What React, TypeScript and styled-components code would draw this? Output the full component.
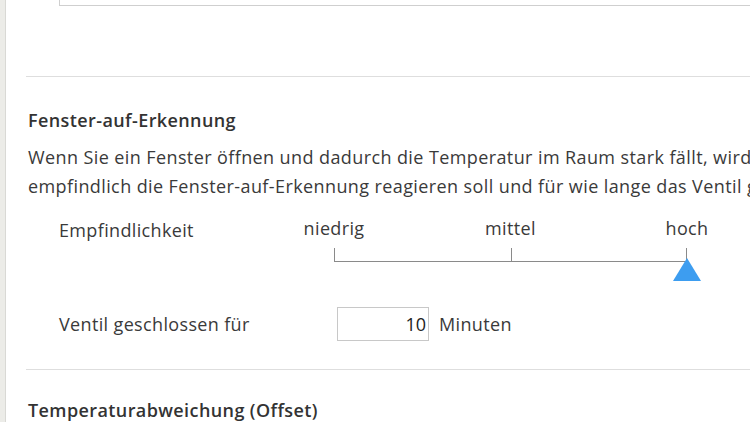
import React from "react";
import styled, { createGlobalStyle } from "styled-components";

const GlobalStyle = createGlobalStyle`
  html, body {
    margin: 0;
    padding: 0;
    background: #ffffff;
    overflow: hidden;
  }
  body {
    font-family: "Open Sans", "Noto Sans", sans-serif;
    color: #333333;
  }
`;

const Page = styled.div`
  display: flex;
  width: 750px;
  height: 422px;
  overflow: hidden;
`;

const Rail = styled.div`
  flex: 0 0 5px;
  background: #ecece8;
  border-right: 1px solid #d9d9d5;
`;

const Content = styled.div`
  flex: 1;
  min-width: 0;
  padding-left: 20px;
`;

const TopField = styled.div`
  margin-left: 33px;
  height: 5px;
  border-left: 1px solid #cfcfcf;
  border-bottom: 1px solid #cfcfcf;
`;

const Section = styled.section`
  margin-top: 70px;
  border-top: 1px solid #dedede;
  padding-left: 2px;
`;

const Heading = styled.h3`
  margin: 0;
  padding-top: 32px;
  font-size: 18px;
  font-weight: 600;
  letter-spacing: 0.4px;
  line-height: 22px;
  color: #333333;
`;

const Text = styled.p`
  margin: 12px 0 0;
  font-size: 18px;
  letter-spacing: 0.4px;
  line-height: 29px;
  color: #3a3a3a;
  white-space: nowrap;
`;

const Row = styled.div<{ $top: number }>`
  display: grid;
  grid-template-columns: 275px auto;
  align-items: start;
  margin-top: ${(p) => p.$top}px;
  padding-left: 31px;
  font-size: 18px;
  letter-spacing: 0.35px;
  color: #3a3a3a;
`;

const Label = styled.div<{ $shift?: number }>`
  padding-top: ${(p) => p.$shift ?? 0}px;
  line-height: 22px;
  align-self: ${(p) => (p.$shift === undefined ? "center" : "start")};
`;

const Slider = styled.div`
  width: 353px;
`;

const Marks = styled.div`
  display: flex;
  justify-content: space-between;
  line-height: 22px;
`;

const Mark = styled.span`
  width: 0;
  display: flex;
  justify-content: center;
  white-space: nowrap;
`;

const Track = styled.div`
  position: relative;
  margin-top: 9px;
  height: 14px;
  border-left: 1.5px solid #8a8a8a;
  border-right: 1.5px solid #8a8a8a;
  border-bottom: 1.5px solid #8a8a8a;
  box-sizing: border-box;
`;

const MidTick = styled.span`
  position: absolute;
  left: 50%;
  top: 0;
  bottom: 0;
  border-left: 1.5px solid #8a8a8a;
`;

const Thumb = styled.svg`
  position: absolute;
  right: -15px;
  top: 10px;
`;

const FieldWrap = styled.div`
  display: flex;
  align-items: center;
  gap: 10px;
`;

const NumberBox = styled.input`
  box-sizing: border-box;
  width: 92px;
  height: 34px;
  margin: 0 0 0 3px;
  border: 1px solid #c8c8c8;
  padding: 0 2px 0 0;
  text-align: right;
  font-family: "Open Sans", "Noto Sans", sans-serif;
  font-size: 18px;
  color: #222;
  outline: none;
`;

const Unit = styled.span``;

const Divider = styled.div`
  margin-top: 28px;
  border-top: 1px solid #dedede;
`;

const NextHeading = styled(Heading)`
  padding-top: 29px;
  padding-left: 2px;
`;

export default function App() {
  return (
    <>
      <GlobalStyle />
      <Page>
        <Rail />
        <Content>
          <TopField />
          <Section>
            <Heading>Fenster-auf-Erkennung</Heading>
            <Text>
              Wenn Sie ein Fenster öffnen und dadurch die Temperatur im Raum stark fällt, wird das Ventil geschlossen.
              <br />
              empfindlich die Fenster-auf-Erkennung reagieren soll und für wie lange das Ventil geschlossen bleibt.
            </Text>
            <Row $top={16}>
              <Label $shift={2}>Empfindlichkeit</Label>
              <Slider>
                <Marks>
                  <Mark>niedrig</Mark>
                  <Mark>mittel</Mark>
                  <Mark>hoch</Mark>
                </Marks>
                <Track>
                  <MidTick />
                  <Thumb width="28" height="23" viewBox="0 0 28 23">
                    <polygon points="14,0 28,23 0,23" fill="#3d9df0" />
                  </Thumb>
                </Track>
              </Slider>
            </Row>
            <Row $top={45}>
              <Label>Ventil geschlossen für</Label>
              <FieldWrap>
                <NumberBox defaultValue="10" />
                <Unit>Minuten</Unit>
              </FieldWrap>
            </Row>
          </Section>
          <Divider />
          <NextHeading>Temperaturabweichung (Offset)</NextHeading>
        </Content>
      </Page>
    </>
  );
}
